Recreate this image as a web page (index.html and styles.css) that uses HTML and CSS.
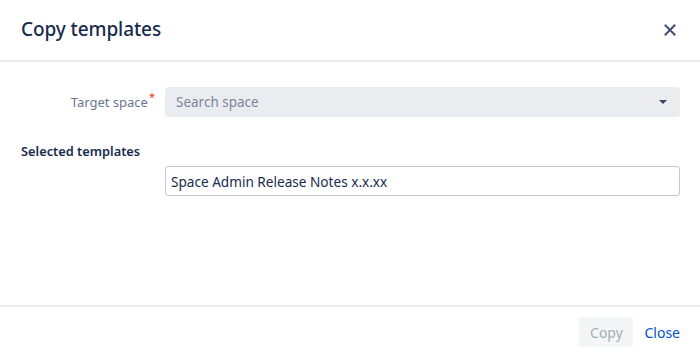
FILE: index.html
```html
<!DOCTYPE html>
<html>
<head>
<meta charset="utf-8">
<link rel="stylesheet" href="styles.css">
</head>
<body>
<div class="dialog">
  <header class="dialog-header">
    <h1 class="dialog-title">Copy templates</h1>
    <button class="close-icon" aria-label="Close">
      <svg width="12" height="12" viewBox="0 0 12 12"><path d="M1.5 1.5 L10.5 10.5 M10.5 1.5 L1.5 10.5" stroke="#42526e" stroke-width="2" stroke-linecap="square"/></svg>
    </button>
  </header>
  <main class="dialog-body">
    <div class="field-row">
      <label class="field-label">Target space<span class="req">*</span></label>
      <div class="select">
        <span class="placeholder">Search space</span>
        <svg class="caret" width="8" height="4" viewBox="0 0 8 4"><path d="M0 0 H8 L4 4 Z" fill="#344563"/></svg>
      </div>
    </div>
    <div class="section-title">Selected templates</div>
    <div class="template-row">
      <div class="template-input">Space Admin Release Notes x.x.xx</div>
    </div>
  </main>
  <footer class="dialog-footer">
    <button class="btn btn-disabled">Copy</button>
    <button class="btn btn-link">Close</button>
  </footer>
</div>
</body>
</html>
```
FILE: styles.css
```css
* { box-sizing: border-box; }
html, body { margin: 0; padding: 0; background: #fff; }
body {
  font-family: "Noto Sans", "Open Sans", sans-serif;
  font-size: 14px;
  color: #172b4d;
}
.dialog {
  width: 700px;
  height: 357px;
  display: flex;
  flex-direction: column;
  background: #fff;
  border-radius: 3px;
}
.dialog-header {
  height: 62px;
  display: flex;
  align-items: center;
  justify-content: space-between;
  padding: 0 24px 2px 21px;
  border-bottom: 2px solid #ebecf0;
}
.dialog-title {
  margin: 0;
  font-size: 19px;
  font-weight: 500;
  color: #172b4d;
  letter-spacing: -0.1px;
}
.close-icon {
  border: 0;
  background: none;
  padding: 0;
  width: 12px;
  height: 12px;
  display: flex;
  margin-top: 1px;
}
.dialog-body {
  flex: 1;
  padding: 25px 20px 0 20px;
}
.field-row {
  display: flex;
  align-items: center;
  gap: 10px;
}
.field-label {
  width: 135px;
  text-align: right;
  color: #6b778c;
  font-size: 13px;
}
.req {
  color: #de350b;
  font-size: 11px;
  position: relative;
  top: -6px;
  margin-left: 1px;
}
.select {
  flex: 1;
  height: 30px;
  background: #ebecf0;
  border-radius: 3px;
  display: flex;
  align-items: center;
  justify-content: space-between;
  padding: 0 13px 0 11px;
}
.placeholder {
  color: #7a869a;
  font-size: 13.5px;
}
.section-title {
  margin-top: 24px;
  font-weight: 600;
  font-size: 12.8px;
  line-height: 20px;
  padding-left: 1px;
}
.template-row {
  margin-top: 5px;
  padding-left: 145px;
}
.template-input {
  height: 30px;
  border: 1px solid #c1c7d0;
  border-radius: 3px;
  display: flex;
  align-items: center;
  padding: 0 6px 0 5px;
  font-size: 13.6px;
  color: #172b4d;
}
.dialog-footer {
  height: 52px;
  border-top: 2px solid #ebecf0;
  display: flex;
  justify-content: flex-end;
  align-items: center;
  padding: 0 20px 0 0;
}
.btn {
  font-family: inherit;
  font-size: 14px;
  border: 0;
  height: 30px;
  border-radius: 3px;
  padding: 0 10px;
  background: none;
}
.btn-disabled {
  background: #f4f5f7;
  color: #a5adba;
  width: 54px;
}
.btn-link {
  color: #0052cc;
  padding: 0 0 0 11px;
}
```
